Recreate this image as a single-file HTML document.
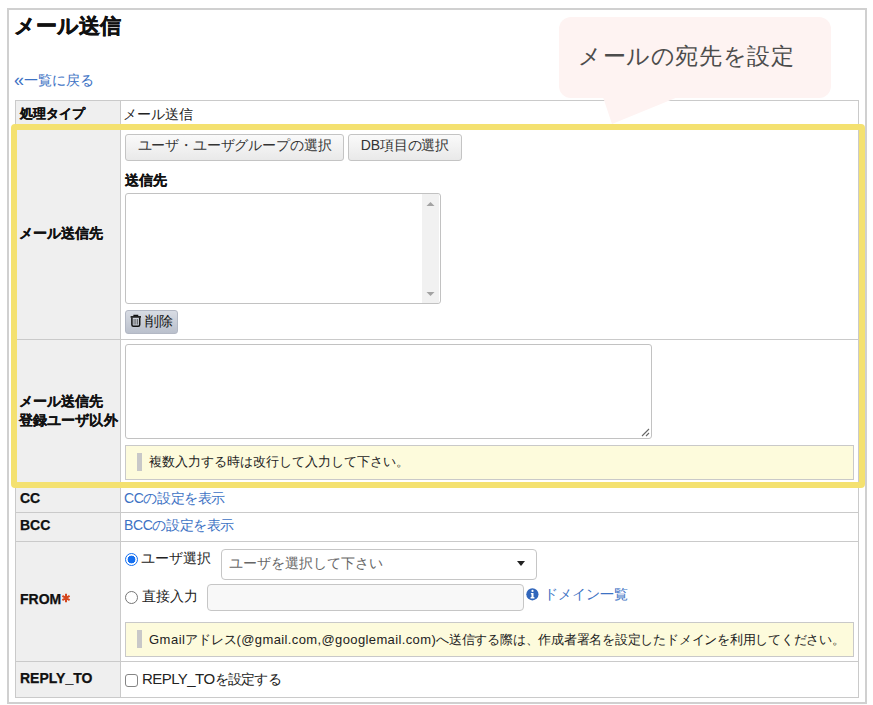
<!DOCTYPE html>
<html lang="ja"><head><meta charset="utf-8">
<style>
*{box-sizing:border-box;margin:0;padding:0}
html,body{width:873px;height:705px;overflow:hidden;background:#fff}
body{position:relative;font-family:"Liberation Sans",sans-serif;color:#222;font-size:14px;line-height:1}
.a{position:absolute;white-space:nowrap}
.outer{left:7px;top:8px;width:860px;height:696px;border:2px solid #d0d0d0}
.title{left:14px;top:15px;font-size:21px;font-weight:bold;color:#111;-webkit-text-stroke:0.5px #111}
.back{left:14px;top:71px;font-size:14px;color:#3d72c4}
.tbl{left:15px;top:100px;width:844px;height:598px;border:1px solid #cacaca;background:#fff}
.lab{left:16px;top:101px;width:104px;height:596px;background:#efefef}
.vl{left:120px;top:101px;width:1px;height:596px;background:#cacaca}
.hl{left:16px;width:842px;height:1px;background:#cacaca}
.lt{left:20px;font-weight:bold;font-size:14px;color:#111;-webkit-text-stroke:0.25px #111}
.txt{font-size:14px;color:#222}
.btn{height:27px;border:1px solid #c4c4c4;border-radius:3px;background:linear-gradient(#fafafa,#e9e9e9);font-size:14px;color:#333;text-align:center;line-height:21px;letter-spacing:-0.15px}
.ta{border:1px solid #c2c2c2;border-radius:3px;background:#fff}
.note{border:1px solid #c9c9c9;background:#fdfbdc;height:35px}
.bar{left:11px;top:7px;width:5px;height:18px;background:#c8c8c8}
.link{color:#3d72c4}
.yellow{left:11px;top:124px;width:854px;height:364px;border:6px solid #f4e170;border-radius:4px}
.callout{left:559px;top:17px;width:272px;height:81px;border-radius:12px;background:#fef3f2}
</style></head><body>
<div class="a outer"></div>
<div class="a title">メール送信</div>
<div class="a back"><span style="font-size:18px;margin-right:0;vertical-align:-1px">«</span>一覧に戻る</div>

<div class="a tbl"></div>
<div class="a lab"></div>
<div class="a vl"></div>
<div class="a hl" style="top:129px"></div>
<div class="a hl" style="top:339px"></div>
<div class="a hl" style="top:483px"></div>
<div class="a hl" style="top:512px"></div>
<div class="a hl" style="top:541px"></div>
<div class="a hl" style="top:661px"></div>

<div class="a lt" style="top:107px;font-size:13px">処理タイプ</div>
<div class="a txt" style="left:123px;top:107px">メール送信</div>

<div class="a lt" style="left:19px;top:226px">メール送信先</div>
<div class="a btn" style="left:125px;top:134px;width:219px">ユーザ・ユーザグループの選択</div>
<div class="a btn" style="left:348px;top:134px;width:114px">DB項目の選択</div>
<div class="a lt" style="left:125px;top:173px">送信先</div>
<div class="a ta" style="left:125px;top:193px;width:316px;height:111px">
  <div class="a" style="right:1px;top:0;width:17px;height:109px;background:#f1f1f1"></div><svg class="a" style="right:1px;top:0" width="17" height="109"><path d="M4.5 12h8l-4-4z" fill="#a3a3a3"/><path d="M4.5 98h8l-4 4z" fill="#a3a3a3"/></svg>
</div>
<div class="a" style="left:125px;top:310px;width:53px;height:24px;border:1px solid #b3b8c4;border-radius:3px;background:linear-gradient(#d8dce4,#bac0cc)"></div>
<svg class="a" style="left:130px;top:314px" width="12" height="14" viewBox="0 0 12 14"><path d="M4 2.2V1.3h3.6v0.9" fill="none" stroke="#111" stroke-width="1.3"/><path d="M0.6 2.9h10.4" stroke="#111" stroke-width="1.6"/><path d="M1.9 3.6v7.2q0 1.5 1.5 1.5h4.8q1.5 0 1.5-1.5V3.6" fill="none" stroke="#111" stroke-width="1.5"/><path d="M4.1 5v5.5M5.8 5v5.5M7.5 5v5.5" stroke="#555" stroke-width="0.8"/></svg><div class="a txt" style="left:145px;top:314px;color:#111">削除</div>

<div class="a lt" style="left:19px;top:392px;line-height:19px;font-size:13.6px;letter-spacing:0.1px">メール送信先<br>登録ユーザ以外</div>
<div class="a ta" style="left:125px;top:344px;width:527px;height:95px"><svg class="a" style="right:1px;bottom:1px" width="10" height="10"><path d="M9 2L2 9M9 6L6 9" stroke="#666" stroke-width="1.1"/></svg></div>
<div class="a note" style="left:125px;top:445px;width:729px"><div class="a bar"></div><div class="a" style="left:23px;top:10px;font-size:12.8px;color:#222">複数入力する時は改行して入力して下さい。</div></div>

<div class="a lt" style="top:491px">CC</div>
<div class="a txt link" style="left:124px;top:491px;letter-spacing:-0.4px">CCの設定を表示</div>
<div class="a lt" style="top:518px">BCC</div>
<div class="a txt link" style="left:124px;top:518px;letter-spacing:-0.4px">BCCの設定を表示</div>

<div class="a lt" style="top:592px">FROM</div><svg class="a" style="left:61px;top:593px" width="10" height="10" viewBox="0 0 10 10"><path d="M5 0.8V9.2M1.4 2.9L8.6 7.1M1.4 7.1L8.6 2.9" stroke="#d4461f" stroke-width="2"/></svg>
<div class="a" style="left:125px;top:553px;width:13px;height:13px;border-radius:50%;border:1.5px solid #1670f0;background:radial-gradient(circle,#1670f0 0 3.6px,#fff 4.2px)"></div>
<div class="a txt" style="left:141px;top:551px">ユーザ選択</div>
<div class="a" style="left:221px;top:549px;width:316px;height:31px;border:1px solid #c6c6c6;border-radius:4px;background:#fff"></div>
<div class="a txt" style="left:229px;top:556px;color:#666">ユーザを選択して下さい</div>
<div class="a" style="left:517px;top:561px;width:0;height:0;border-left:4px solid transparent;border-right:4px solid transparent;border-top:5px solid #222"></div>
<div class="a" style="left:125px;top:591px;width:13px;height:13px;border-radius:50%;border:1.2px solid #767676;background:#fff"></div>
<div class="a txt" style="left:142px;top:589px">直接入力</div>
<div class="a" style="left:207px;top:584px;width:317px;height:27px;border:1px solid #c6c6c6;border-radius:4px;background:#f8f8f8"></div>
<svg class="a" style="left:526px;top:588px" width="13" height="13" viewBox="0 0 13 13"><circle cx="6.4" cy="6.3" r="6.1" fill="#3166bb"/><circle cx="6.5" cy="2.9" r="1.1" fill="#fff"/><path d="M4.9 4.9h2.6v4.2h0.9v1.5H4.6V9.1h0.9V6.3h-0.6z" fill="#fff"/></svg>
<div class="a txt link" style="left:544px;top:587px">ドメイン一覧</div>
<div class="a note" style="left:125px;top:622px;width:729px"><div class="a bar"></div><div class="a" style="left:23px;top:10px;font-size:13px;color:#222;letter-spacing:-0.23px"><span style="letter-spacing:0.5px">Gmail</span>アドレス<span style="letter-spacing:0.38px">(@gmail.com,@googlemail.com)</span>へ送信する際は、作成者署名を設定したドメインを利用してください。</div></div>

<div class="a lt" style="top:671px">REPLY_TO</div>
<div class="a" style="left:125px;top:674px;width:13px;height:13px;border:1.3px solid #858585;border-radius:3px;background:#fff"></div>
<div class="a txt" style="left:142px;top:671px;letter-spacing:-0.7px"><span style="font-size:15px;letter-spacing:-0.55px">REPLY_TO</span>を設定する</div>

<div class="a yellow"></div>
<div class="a callout"></div>
<svg class="a" style="left:0;top:0" width="873" height="705"><polygon points="603,97 678,97 612,124" fill="#fef3f2"/></svg>
<div class="a" style="left:578px;top:45px;font-size:23px;color:#4c4c4c;font-weight:300;letter-spacing:0.6px">メールの宛先を設定</div>
</body></html>
